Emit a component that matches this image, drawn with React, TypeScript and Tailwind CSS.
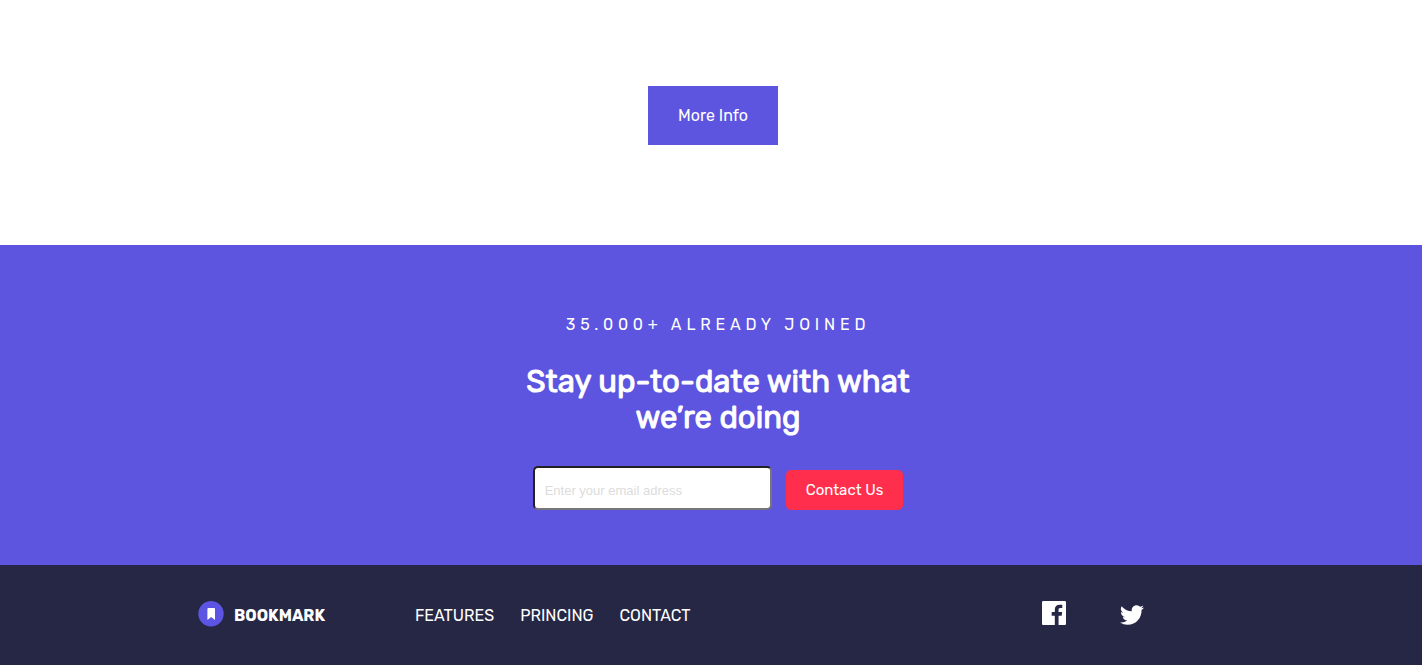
const navLinks = ['FEATURES', 'PRINCING', 'CONTACT'];

function Logo() {
  return (
    <a href="#" aria-label="Bookmark" className="flex items-start gap-[10px]">
      <svg className="mt-px" width="26" height="26" viewBox="0 0 26 26" aria-hidden="true">
        <circle cx="13" cy="12.7" r="12.7" fill="#5c54e2" />
        <path d="M10.5 7h5.4c.7 0 1.1.5 1.1 1.1V19l-3.8-2.9L9.4 19V8.1c0-.6.5-1.1 1.1-1.1z" fill="#fff" />
      </svg>
      <span className="pt-1 text-base leading-6 font-bold">BOOKMARK</span>
    </a>
  );
}

function FacebookIcon() {
  return (
    <svg width="24" height="24" viewBox="0 0 24 24" fill="#fff" aria-hidden="true">
      <path d="M22.675 0H1.325C.593 0 0 .593 0 1.325v21.351C0 23.407.593 24 1.325 24H12.82v-9.294H9.692v-3.622h3.128V8.413c0-3.1 1.893-4.788 4.659-4.788 1.325 0 2.463.099 2.795.143v3.24l-1.918.001c-1.504 0-1.795.715-1.795 1.763v2.313h3.587l-.467 3.622h-3.12V24h6.116c.73 0 1.323-.593 1.323-1.325V1.325C24 .593 23.407 0 22.675 0z" />
    </svg>
  );
}

function TwitterIcon() {
  return (
    <svg width="24" height="20" viewBox="0 0 24 20" fill="#fff" aria-hidden="true">
      <path d="M24 2.557a9.83 9.83 0 01-2.828.775A4.932 4.932 0 0023.337.608a9.864 9.864 0 01-3.127 1.195A4.916 4.916 0 0016.616.248c-3.179 0-5.515 2.966-4.797 6.045A13.978 13.978 0 011.671 1.149a4.93 4.93 0 001.523 6.574 4.903 4.903 0 01-2.229-.616c-.054 2.281 1.581 4.415 3.949 4.89a4.935 4.935 0 01-2.224.084 4.928 4.928 0 004.6 3.419A9.9 9.9 0 010 17.54a13.94 13.94 0 007.548 2.212c9.142 0 14.307-7.721 13.995-14.646A10.025 10.025 0 0024 2.557z" />
    </svg>
  );
}

export default function App() {
  return (
    <div className="bg-white font-[Rubik,Roboto,sans-serif] text-white">
      <section className="flex justify-center pt-[86px] pb-[100px] pl-1">
        <button type="button" className="bg-[#5d54e0] px-[30px] py-[17px] text-base leading-[25px]">
          More Info
        </button>
      </section>

      <section className="flex flex-col items-center bg-[#5d54e0] pt-[68px] pb-[55px] pl-[14px] text-center">
        <p className="text-base leading-6 tracking-[0.3em]">35.000+ ALREADY JOINED</p>
        <h2 className="mt-[27px] w-[400px] text-[31px] leading-9 font-normal [-webkit-text-stroke:1px_white]">
          Stay up-to-date with what we’re doing
        </h2>
        <form className="mt-[30px] flex items-end gap-[14px]" onSubmit={(e) => e.preventDefault()}>
          <input
            type="email"
            aria-label="Email address"
            placeholder="Enter your email adress"
            className="h-11 w-[239px] rounded-[5px] border-2 border-t-[#222] border-r-[#767676] border-b-[#767676] border-l-[#222] bg-white px-[10px] pt-[5px] font-[Liberation_Sans,sans-serif] text-[13px] text-black placeholder:text-[#dcdcdc]"
          />
          <button type="submit" className="h-10 rounded-[5px] bg-[#ff2e4c] px-5 text-[15px] leading-5">
            Contact Us
          </button>
        </form>
      </section>

      <footer className="flex h-[100px] items-start bg-[#262645] pt-[35px] pr-[278px] pl-[198px]">
        <div className="w-[217px]">
          <Logo />
        </div>
        <nav className="flex gap-[26px] pt-1">
          {navLinks.map((label) => (
            <a key={label} href="#" className="text-base leading-6">
              {label}
            </a>
          ))}
        </nav>
        <div className="ml-auto flex items-start gap-[54px] pt-px">
          <a href="#" aria-label="Facebook">
            <FacebookIcon />
          </a>
          <a href="#" aria-label="Twitter" className="pt-1">
            <TwitterIcon />
          </a>
        </div>
      </footer>
    </div>
  );
}
